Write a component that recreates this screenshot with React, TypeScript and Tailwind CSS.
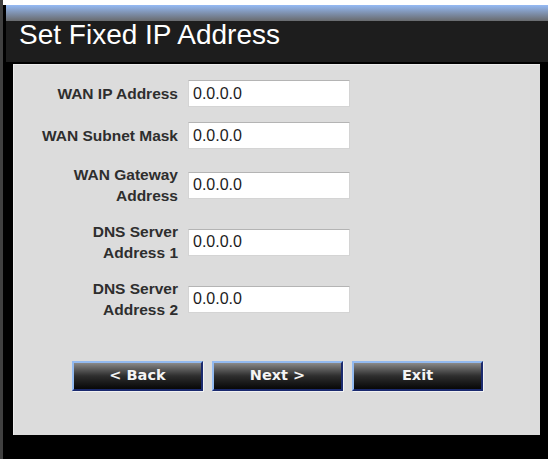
const rows: { label: string[]; value: string }[] = [
  { label: ['WAN IP Address'], value: '0.0.0.0' },
  { label: ['WAN Subnet Mask'], value: '0.0.0.0' },
  { label: ['WAN Gateway', 'Address'], value: '0.0.0.0' },
  { label: ['DNS Server', 'Address 1'], value: '0.0.0.0' },
  { label: ['DNS Server', 'Address 2'], value: '0.0.0.0' },
];

function NavButton({ children }: { children: string }) {
  return (
    <button
      type="button"
      className="h-[30px] w-[131px] border-2 border-t-[#93baf0] border-l-[#93baf0] border-b-[#1b2a6e] border-r-[#1b2a6e] bg-linear-to-b from-[#8a8a8a] via-[#2e2e2e] to-[#080808] text-[14.5px] font-bold text-[#f4f4f4] shadow-[1px_1px_0_#f2f2f2]"
      style={{ fontFamily: '"DejaVu Sans", Verdana, sans-serif' }}
    >
      {children}
    </button>
  );
}

export default function App() {
  return (
    <div
      className="flex h-[459px] w-[548px] flex-col overflow-hidden border-l-[3px] border-[#404040] bg-black"
      style={{ fontFamily: '"Liberation Sans", Arial, sans-serif' }}
    >
      <div className="h-[5px] shrink-0 bg-white" />
      <div className="ml-[3px] shrink-0">
        <div className="h-[17px] bg-linear-to-b from-[#95baf5] to-[#666666]" />
        <div className="h-[41px] bg-[#1d1d1d] pl-[13px]">
          <h1 className="-mt-[1px] text-[28px] leading-[28px] text-white">Set Fixed IP Address</h1>
        </div>
      </div>
      <div className="mt-[2px] ml-[10px] h-[371px] w-[527px] shrink-0 border-t border-l border-[#ececec] bg-[#dcdcdc]">
        <div className="flex flex-col gap-[15px] pt-[15px]">
          {rows.map((r, i) => (
            <div key={i} className="flex items-center">
              <div className="w-[164px] text-right text-[15.5px] font-bold leading-[21px] text-[#2e2e2e]">
                {r.label.map((l) => (
                  <div key={l}>{l}</div>
                ))}
              </div>
              <input
                readOnly
                value={r.value}
                className="ml-[10px] h-[27px] w-[162px] border border-[#d4d4d4] border-t-[#b4b4b4] bg-white pl-[4px] text-[16px] text-[#1c1c1c] outline-none"
              />
            </div>
          ))}
        </div>
        <div className="mt-[41px] flex gap-[9px] pl-[58px]">
          <NavButton>{'< Back'}</NavButton>
          <NavButton>{'Next >'}</NavButton>
          <NavButton>Exit</NavButton>
        </div>
      </div>
    </div>
  );
}
